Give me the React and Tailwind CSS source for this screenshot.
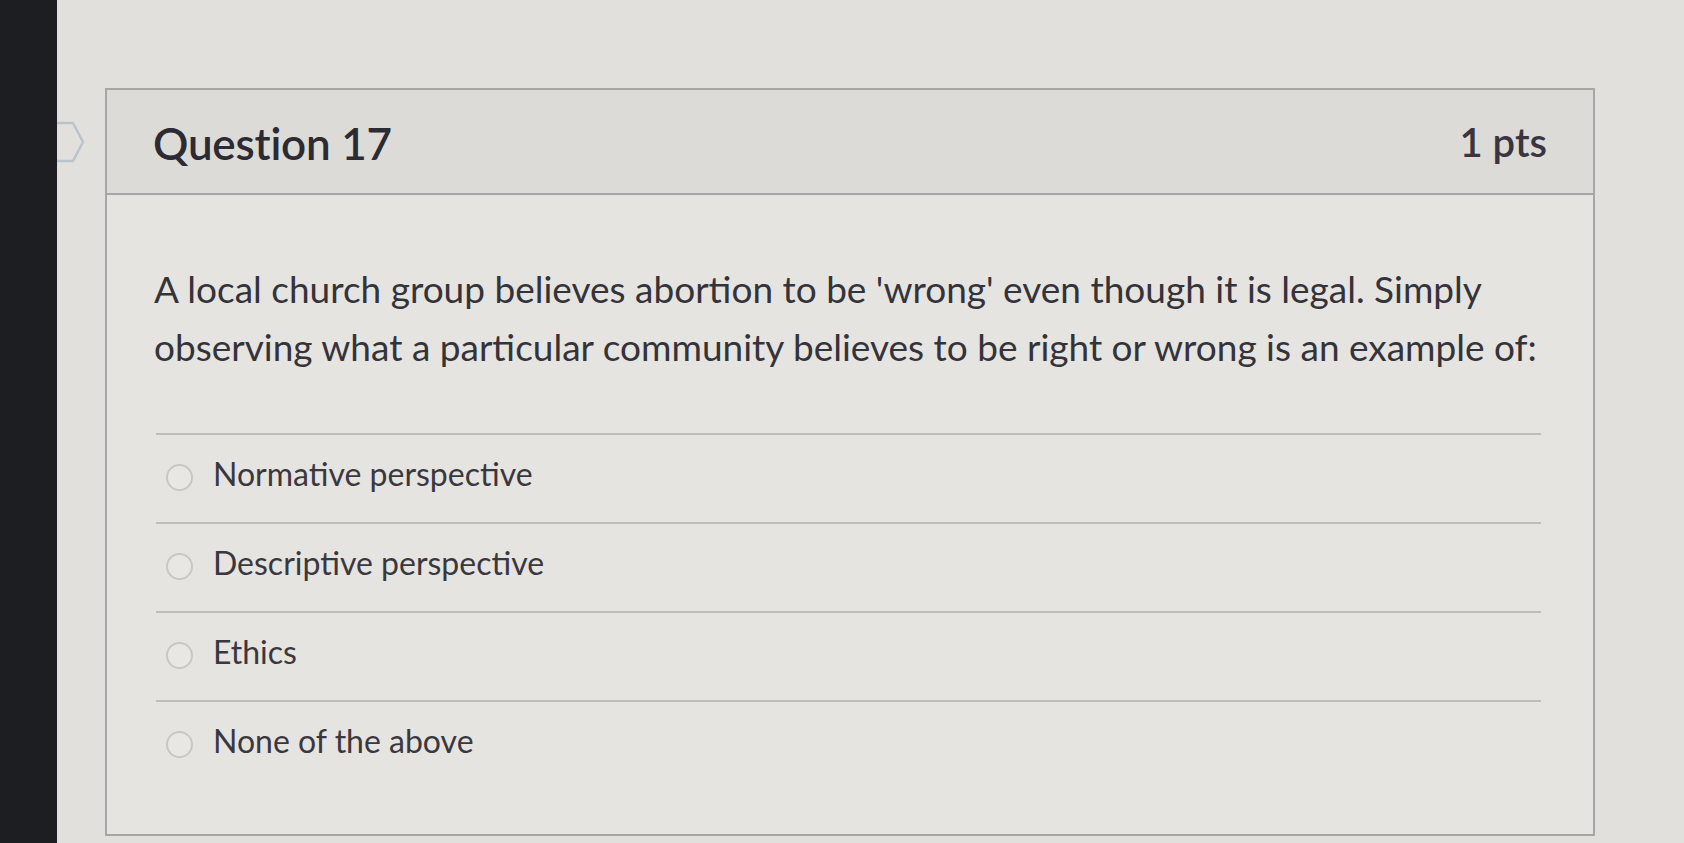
export default function App() {
  const options = [
    "Normative perspective",
    "Descriptive perspective",
    "Ethics",
    "None of the above",
  ];
  return (
    <div
      className="w-[1684px] h-[843px] flex bg-[#e2e0dd] overflow-hidden"
      style={{ fontFamily: "Lato, 'Open Sans', sans-serif" }}
    >
      <div className="w-[57px] h-full bg-[#1d1e21] shrink-0" />
      <div className="relative flex-1 pl-[48px] pt-[88px]">
        <svg
          className="absolute left-0 top-[121px]"
          width="30"
          height="42"
          viewBox="0 0 30 42"
        >
          <path
            d="M0 2 L16 2 L26 21 L16 40 L0 40"
            fill="none"
            stroke="#b9c3cb"
            strokeWidth="2.5"
            strokeLinejoin="round"
          />
        </svg>
        <div className="w-[1490px] h-[748px] border-2 border-[#a7a6a6] bg-[#e6e4e1] flex flex-col">
          <div className="h-[105px] shrink-0 bg-[#dddbd8] border-b-2 border-[#a7a6a6] flex items-center justify-between pl-[46px] pr-[46px]">
            <div className="text-[44px] font-semibold text-[#2c2a33] tracking-[-0.2px] pt-[2px]">
              Question 17
            </div>
            <div className="text-[40px] font-semibold text-[#3a3541]">1 pts</div>
          </div>
          <div className="flex-1 pl-[47px] pr-[52px] pt-[65px]">
            <p className="text-[37px] leading-[58px] text-[#35333a] whitespace-nowrap">
              A local church group believes abortion to be 'wrong' even though it is legal. Simply
              <br />
              observing what a particular community believes to be right or wrong is an example of:
            </p>
            <div className="mt-[57px] ml-[2px]">
              {options.map((o) => (
                <div
                  key={o}
                  className="h-[89px] flex items-center gap-[20px] pl-[10px] border-t-2 border-[#bfbdbb]"
                >
                  <div className="w-[27px] h-[27px] rounded-full border-2 border-[#c9c7c5] bg-[#e9e7e4] shrink-0 mb-[2px]" />
                  <span className="text-[32px] text-[#3a383f] pb-[9px]">{o}</span>
                </div>
              ))}
            </div>
          </div>
        </div>
      </div>
    </div>
  );
}
